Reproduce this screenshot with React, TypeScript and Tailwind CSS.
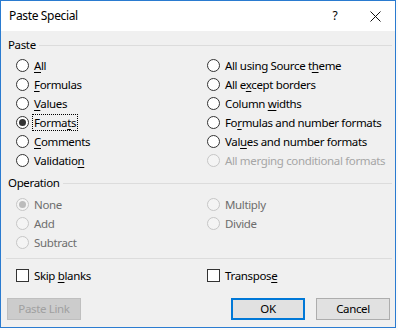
import React from 'react';

const font = { fontFamily: '"Segoe UI", "Noto Sans", "Liberation Sans", sans-serif' };

// label with one underlined access key
const Label = ({ text, k }: { text: string; k?: number }) => {
  if (k === undefined) return <>{text}</>;
  return (
    <>
      {text.slice(0, k)}
      <span className="underline underline-offset-2">{text[k]}</span>
      {text.slice(k + 1)}
    </>
  );
};

const Radio = ({
  text,
  k,
  checked = false,
  disabled = false,
  faint = false,
  focused = false,
}: {
  text: string;
  k?: number;
  checked?: boolean;
  disabled?: boolean;
  faint?: boolean;
  focused?: boolean;
}) => {
  const ring = disabled ? 'border-[#c6c6c6] bg-[#f4f4f4]' : 'border-[#333333] bg-white';
  const color = faint ? 'text-[#a6a6a6]' : disabled ? 'text-[#6d6d6d]' : 'text-black';
  return (
    <div className="flex h-[19px] items-center">
      <span
        className={`flex h-[13px] w-[13px] shrink-0 items-center justify-center rounded-full border ${ring}`}
      >
        {checked && (
          <span
            className={`h-[7px] w-[7px] rounded-full ${disabled ? 'bg-[#bcbcbc]' : 'bg-[#333333]'}`}
          />
        )}
      </span>
      <span
        className={`ml-[4px] whitespace-nowrap px-[1px] leading-[15px] ${color} ${
          focused ? 'outline outline-1 outline-dotted outline-black' : ''
        }`}
      >
        <Label text={text} k={k} />
      </span>
    </div>
  );
};

const Checkbox = ({ text, k }: { text: string; k?: number }) => (
  <div className="flex h-[19px] items-center">
    <span className="h-[13px] w-[13px] border border-[#333333] bg-white" />
    <span className="ml-[5px] whitespace-nowrap">
      <Label text={text} k={k} />
    </span>
  </div>
);

const GroupTitle = ({ title }: { title: string }) => (
  <div className="flex h-[14px] items-center pl-[2px]">
    <span>{title}</span>
    <div className="ml-[3px] mt-[1px] h-px flex-1 bg-[#dcdcdc]" />
  </div>
);

export default function App() {
  return (
    <div
      className="h-[330px] w-[398px] bg-[#fbfbfb] text-[11.5px] tracking-[-0.35px] text-black"
      style={font}
    >
      <div className="flex h-[328px] w-[396px] flex-col border border-[#2a7bd0] bg-[#f0f0f0]">
        {/* title bar */}
        <div className="flex h-[30px] shrink-0 items-center bg-white pl-2 text-[12px]">
          <span className="flex-1">Paste Special</span>
          <span className="w-[12px] text-center">?</span>
          <span className="ml-[29px] mr-[14px]">
            <svg width="11" height="11" viewBox="0 0 11 11">
              <path d="M0.5 0.5 L10.5 10.5 M10.5 0.5 L0.5 10.5" stroke="#111" strokeWidth="1" />
            </svg>
          </span>
        </div>

        <div className="flex flex-1 flex-col pl-[5px] pr-[3px] pt-[7px]">
          <GroupTitle title="Paste" />
          <div className="mt-[4px] grid grid-cols-[191px_1fr] pl-[10px]">
            <div className="flex flex-col">
              <Radio text="All" k={0} />
              <Radio text="Formulas" k={0} />
              <Radio text="Values" k={0} />
              <Radio text="Formats" k={5} checked focused />
              <Radio text="Comments" k={0} />
              <Radio text="Validation" k={9} />
            </div>
            <div className="flex flex-col">
              <Radio text="All using Source theme" k={18} />
              <Radio text="All except borders" k={5} />
              <Radio text="Column widths" k={7} />
              <Radio text="Formulas and number formats" k={2} />
              <Radio text="Values and number formats" k={3} />
              <Radio text="All merging conditional formats" disabled faint />
            </div>
          </div>

          <div className="mt-[6px]">
            <GroupTitle title="Operation" />
          </div>
          <div className="mt-[5px] grid grid-cols-[191px_1fr] pl-[10px]">
            <div className="flex flex-col">
              <Radio text="None" checked disabled />
              <Radio text="Add" disabled />
              <Radio text="Subtract" disabled />
            </div>
            <div className="flex flex-col">
              <Radio text="Multiply" disabled />
              <Radio text="Divide" disabled />
            </div>
          </div>

          <div className="mt-[6px] h-px bg-[#dcdcdc]" />

          <div className="mt-[7px] grid grid-cols-[191px_1fr] pl-[10px]">
            <Checkbox text="Skip blanks" k={5} />
            <Checkbox text="Transpose" k={8} />
          </div>

          <div className="mt-[13px] flex items-center">
            <div className="ml-[1px] flex h-[22px] w-[74px] items-center justify-center border border-[#bfbfbf] bg-[#cccccc] text-[#a0a0a0]">
              Paste Link
            </div>
            <div className="ml-auto flex h-[22px] w-[74px] items-center justify-center border-2 border-[#0078d7] bg-[#e1e1e1]">
              OK
            </div>
            <div className="ml-[11px] mr-[2px] flex h-[22px] w-[74px] items-center justify-center border border-[#adadad] bg-[#e1e1e1]">
              Cancel
            </div>
          </div>
        </div>
      </div>
    </div>
  );
}
